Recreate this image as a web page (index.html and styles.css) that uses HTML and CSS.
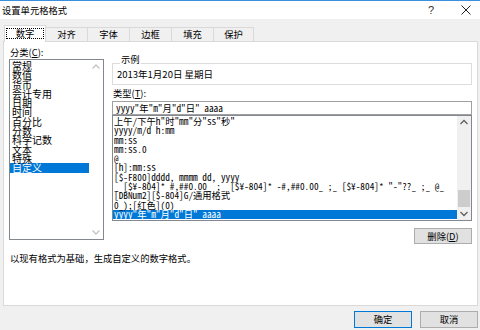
FILE: index.html
```html
<!DOCTYPE html>
<html lang="zh-CN">
<head>
    <meta charset="UTF-8">
    <meta name="viewport" content="width=device-width, initial-scale=1.0">
    <title>设置单元格格式</title>
    <link rel="stylesheet" href="styles.css">
</head>
<body>
    <header class="titlebar">
        <span class="title">设置单元格格式</span>
        <span class="help">?</span>
        <span class="close">
            <svg width="10" height="10" viewBox="0 0 10 10"><path d="M0.5 0.5 L9.5 9.5 M9.5 0.5 L0.5 9.5" stroke="#222" stroke-width="1" fill="none"/></svg>
        </span>
    </header>

    <nav class="tabs">
        <div class="tab active"><span class="focus">数字</span></div>
        <div class="tab">对齐</div>
        <div class="tab">字体</div>
        <div class="tab">边框</div>
        <div class="tab">填充</div>
        <div class="tab">保护</div>
    </nav>

    <section class="panel">
        <div class="cols">
            <div class="left">
                <div class="label">分类(<u>C</u>):</div>
                <div class="listbox catlist">
                    <ul class="items cats">
                        <li>常规</li>
                        <li>数值</li>
                        <li>货币</li>
                        <li>会计专用</li>
                        <li>日期</li>
                        <li>时间</li>
                        <li>百分比</li>
                        <li>分数</li>
                        <li>科学记数</li>
                        <li>文本</li>
                        <li>特殊</li>
                        <li class="selected">自定义</li>
                    </ul>
                    <div class="vscroll disabled">
                        <svg class="arrow" width="14" height="14" viewBox="0 0 14 14"><path d="M3.5 8.5 L7 5 L10.5 8.5" stroke="currentColor" stroke-width="1.3" fill="none"/></svg>
                        <svg class="arrow" width="14" height="14" viewBox="0 0 14 14"><path d="M3.5 5.5 L7 9 L10.5 5.5" stroke="currentColor" stroke-width="1.3" fill="none"/></svg>
                    </div>
                </div>
            </div>

            <div class="right">
                <div class="sample">
                    <span class="legend">示例</span>
                    <div class="sample-text">2013年1月20日 星期日</div>
                </div>
                <div class="label">类型(<u>T</u>):</div>
                <div class="typein">yyyy"年"m"月"d"日" aaaa</div>
                <div class="listbox typelist">
                    <ul class="items types">
                        <li>上午/下午h"时"mm"分"ss"秒"</li>
                        <li>yyyy/m/d h:mm</li>
                        <li>mm:ss</li>
                        <li>mm:ss.0</li>
                        <li>@</li>
                        <li>[h]:mm:ss</li>
                        <li>[$-F800]dddd, mmmm dd, yyyy</li>
                        <li>_ [$¥-804]* #,##0.00_ ;_ [$¥-804]* -#,##0.00_ ;_ [$¥-804]* "-"??_ ;_ @_</li>
                        <li>[DBNum2][$-804]G/通用格式</li>
                        <li>0_);[红色](0)</li>
                        <li class="selected">yyyy"年"m"月"d"日" aaaa</li>
                    </ul>
                    <div class="vscroll">
                        <svg class="arrow" width="14" height="13" viewBox="0 0 14 13"><path d="M3.5 8 L7 4.5 L10.5 8" stroke="currentColor" stroke-width="1.3" fill="none"/></svg>
                        <div class="track"><div class="thumb"></div></div>
                        <svg class="arrow" width="14" height="13" viewBox="0 0 14 13"><path d="M3.5 5 L7 8.5 L10.5 5" stroke="currentColor" stroke-width="1.3" fill="none"/></svg>
                    </div>
                </div>
                <div class="actions">
                    <button class="btn">删除(<u>D</u>)</button>
                </div>
            </div>
        </div>
        <p class="desc">以现有格式为基础，生成自定义的数字格式。</p>
    </section>

    <footer class="footer">
        <button class="btn default">确定</button>
        <button class="btn">取消</button>
    </footer>
</body>
</html>
```

FILE: styles.css
```css
* {
    box-sizing: border-box;
}
body {
    margin: 0;
    width: 480px;
    height: 330px;
    overflow: hidden;
    background: #f0f0f0;
    font-family: "Noto Sans CJK SC", "Liberation Sans", sans-serif;
    font-size: 9.3px;
    color: #000;
}
u {
    text-decoration: underline;
}

/* title bar */
.titlebar {
    height: 19px;
    background: #fff;
    border-top: 1px solid #3c8fdc;
    display: flex;
    align-items: center;
    padding-left: 2px;
}
.title {
    flex: 1;
    font-size: 9.3px;
}
.help {
    width: 28px;
    margin-right: 7px;
    text-align: center;
    font-family: "Liberation Sans", sans-serif;
    font-size: 11px;
    color: #333;
}
.close {
    width: 28px;
    display: flex;
    justify-content: center;
}

/* tabs */
.tabs {
    position: relative;
    z-index: 1;
    height: 23px;
    margin-bottom: -1px;
    padding-left: 4px;
    display: flex;
    align-items: flex-end;
}
.tab {
    width: 43px;
    height: 14px;
    margin-bottom: 1px;
    margin-left: -1px;
    border: 1px solid #d9d9d9;
    border-bottom: none;
    background: #f0f0f0;
    text-align: center;
    line-height: 13px;
}
.tab:first-child {
    margin-left: 0;
    width: 42px;
}
.tab:last-child {
    width: 41px;
}
.tab.active {
    height: 17px;
    margin-bottom: 0;
    background: #fff;
}
.focus {
    display: block;
    height: 11px;
    margin: 2px 1px 0;
    border: 1px dotted #000;
    line-height: 9px;
}

/* panel */
.panel {
    height: 265px;
    margin: 0 2px 0 3px;
    padding: 4px 5px 0 5px;
    background: #fff;
    border: 1px solid #d9d9d9;
}
.cols {
    display: flex;
    gap: 8px;
}
.left {
    width: 95px;
}
.right {
    width: 360px;
    padding-top: 17px;
}
.label {
    height: 13px;
    line-height: 13px;
    padding-left: 1px;
}

.listbox {
    display: flex;
    border: 1px solid #828790;
    background: #fff;
}
.items {
    flex: 1;
    list-style: none;
    margin: 0;
    padding: 1px 0 0;
    overflow: hidden;
}
.items li {
    white-space: nowrap;
}
.items li.selected {
    background: #0078d7;
    color: #fff;
}

.catlist {
    height: 181px;
}
.cats li {
    height: 9.3px;
    line-height: 9.3px;
    font-size: 10px;
    padding-left: 2px;
}

.vscroll {
    width: 14px;
    display: flex;
    flex-direction: column;
    justify-content: space-between;
    background: #f0f0f0;
    color: #606060;
}
.vscroll.disabled {
    background: #fff;
    color: #c4c4c4;
}
.arrow {
    display: block;
}
.track {
    flex: 1;
    display: flex;
    flex-direction: column;
    justify-content: flex-end;
    padding: 0 1px;
}
.thumb {
    height: 17px;
    background: #cdcdcd;
}

/* sample group */
.sample {
    height: 22px;
    padding: 0 4px;
    border: 1px solid #dcdcdc;
}
.legend {
    display: table;
    margin: -10px 0 0 3px;
    padding: 0 1px;
    background: #fff;
    line-height: 11px;
}
.sample-text {
    margin-top: 4px;
    line-height: 11px;
    font-size: 9.5px;
}
.right .label {
    margin-top: 2px;
}

/* type field + list */
.typein,
.types {
    font-family: "Noto Sans Mono CJK SC", "Liberation Mono", "Noto Sans CJK SC", monospace;
    font-size: 9.3px;
}
.typein {
    height: 14px;
    margin-top: 1px;
    padding-left: 3px;
    border: 1px solid #a0a0a0;
    line-height: 12px;
}
.typelist {
    height: 106px;
}
.types li {
    height: 9.3px;
    line-height: 9.3px;
    padding-left: 1px;
}

.actions {
    display: flex;
    justify-content: flex-end;
    margin-top: 7px;
}
.btn {
    width: 58px;
    height: 16px;
    padding: 0;
    border: 1px solid #adadad;
    background: #e1e1e1;
    font-family: "Noto Sans CJK SC", sans-serif;
    font-size: 9.3px;
    line-height: 13px;
    color: #000;
}
.btn.default {
    border-color: #0078d7;
}

.desc {
    margin: 8px 0 0 1px;
    line-height: 13px;
}

/* dialog buttons */
.footer {
    display: flex;
    justify-content: flex-end;
    gap: 8px;
    padding: 5px 2px 0 0;
}
.footer .btn {
    height: 17px;
}
```
